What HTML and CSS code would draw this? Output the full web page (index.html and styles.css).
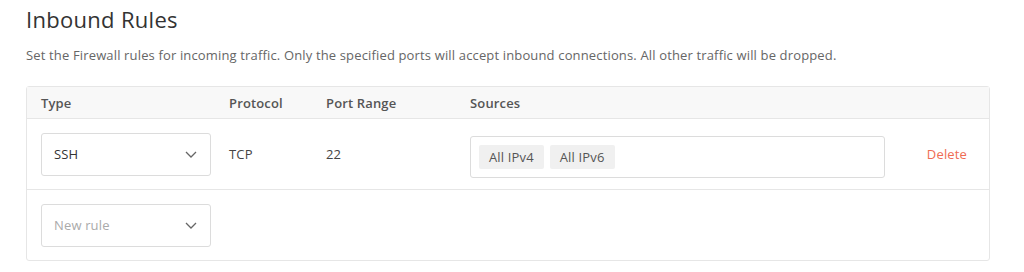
FILE: index.html
```html
<!DOCTYPE html>
<html lang="en">
<head>
    <meta charset="UTF-8">
    <title>Inbound Rules</title>
    <link rel="stylesheet" href="styles.css">
</head>
<body>
    <div class="rules">
        <h2 class="rules-title">Inbound Rules</h2>
        <p class="rules-desc">Set the Firewall rules for incoming traffic. Only the specified ports will accept inbound connections. All other traffic will be dropped.</p>

        <div class="rules-table">
            <div class="row head">
                <div>Type</div>
                <div>Protocol</div>
                <div>Port Range</div>
                <div>Sources</div>
                <div></div>
            </div>
            <div class="row">
                <div class="select">
                    <span>SSH</span>
                    <svg class="chev" width="12" height="7" viewBox="0 0 12 7"><path d="M1 1l5 5 5-5" fill="none" stroke="#666" stroke-width="1.3"/></svg>
                </div>
                <div>TCP</div>
                <div>22</div>
                <div class="sources">
                    <span class="chip">All IPv4</span>
                    <span class="chip">All IPv6</span>
                </div>
                <div class="delete">Delete</div>
            </div>
            <div class="row last">
                <div class="select placeholder">
                    <span>New rule</span>
                    <svg class="chev" width="12" height="7" viewBox="0 0 12 7"><path d="M1 1l5 5 5-5" fill="none" stroke="#666" stroke-width="1.3"/></svg>
                </div>
            </div>
        </div>
    </div>
</body>
</html>
```

FILE: styles.css
```css
body {
    margin: 0;
    background: #fff;
    font-family: 'Open Sans', 'Noto Sans', sans-serif;
    color: #333;
}

.rules {
    padding: 4px 34px 0 26px;
    letter-spacing: 0.15px;
}

.rules-title {
    margin: 0;
    font-size: 22px;
    font-weight: 400;
    color: #333;
    line-height: 30px;
    letter-spacing: 0.3px;
}

.rules-desc {
    margin: 12px 0 0;
    font-size: 13px;
    color: #666;
    line-height: 18px;
}

.rules-table {
    margin-top: 22px;
    border: 1px solid #e6e6e6;
    border-radius: 3px;
}

.row {
    display: grid;
    grid-template-columns: 188px 97px 144px 415px 1fr;
    align-items: center;
    padding: 0 22px 0 14px;
    height: 70px;
    border-bottom: 1px solid #e6e6e6;
    font-size: 13px;
    color: #444;
}

.row.head {
    height: 31px;
    background: #f8f8f8;
    font-weight: 600;
    color: #555;
}

.row.last {
    border-bottom: none;
}

.select {
    width: 170px;
    height: 43px;
    box-sizing: border-box;
    border: 1px solid #dcdcdc;
    border-radius: 3px;
    display: flex;
    align-items: center;
    justify-content: space-between;
    padding: 0 13px 0 12px;
    color: #333;
}

.select.placeholder {
    color: #aaa;
}

.sources {
    height: 42px;
    box-sizing: border-box;
    margin-top: 5px;
    border: 1px solid #dcdcdc;
    border-radius: 3px;
    display: flex;
    align-items: center;
    gap: 6px;
    padding: 0 8px;
}

.chip {
    background: #f0f0f0;
    color: #555;
    padding: 0 10px;
    height: 24px;
    line-height: 24px;
    border-radius: 2px;
}

.delete {
    justify-self: end;
    color: #ef6c53;
}
```
